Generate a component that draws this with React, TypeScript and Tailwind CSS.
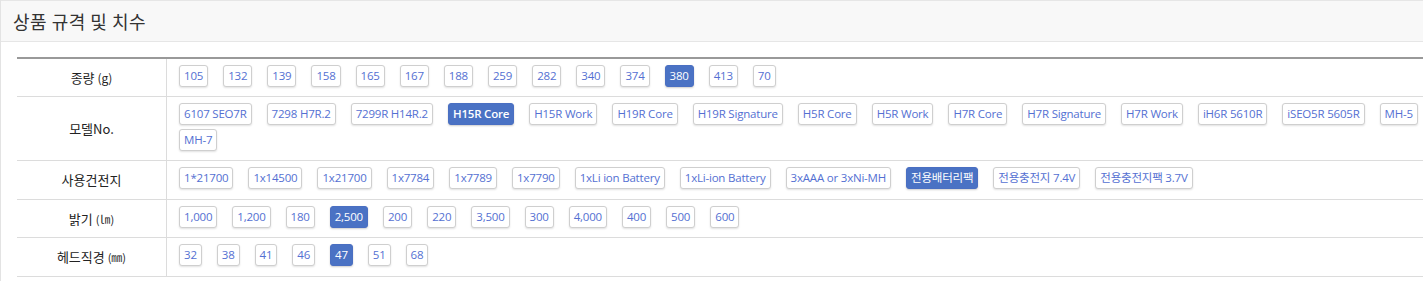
import React from "react";

type Row = { label: React.ReactNode; items: string[]; active: string; pb: string };

const rows: Row[] = [
  {
    label: (
      <>
        종량 <span className="text-[12px]">(g)</span>
      </>
    ),
    items: ["105", "132", "139", "158", "165", "167", "188", "259", "282", "340", "374", "380", "413", "70"],
    active: "380",
    pb: "pb-[9px]",
  },
  {
    label: <>모델No.</>,
    items: [
      "6107 SEO7R",
      "7298 H7R.2",
      "7299R H14R.2",
      "H15R Core",
      "H15R Work",
      "H19R Core",
      "H19R Signature",
      "H5R Core",
      "H5R Work",
      "H7R Core",
      "H7R Signature",
      "H7R Work",
      "iH6R 5610R",
      "iSEO5R 5605R",
      "MH-5",
      "MH-7",
    ],
    active: "H15R Core",
    pb: "pb-[9px]",
  },
  {
    label: <>사용건전지</>,
    items: [
      "1*21700",
      "1x14500",
      "1x21700",
      "1x7784",
      "1x7789",
      "1x7790",
      "1xLi ion Battery",
      "1xLi-ion Battery",
      "3xAAA or 3xNi-MH",
      "전용배터리팩",
      "전용충전지 7.4V",
      "전용충전지팩 3.7V",
    ],
    active: "전용배터리팩",
    pb: "pb-[10px]",
  },
  {
    label: (
      <>
        밝기 <span className="text-[11px]">(㏐)</span>
      </>
    ),
    items: ["1,000", "1,200", "180", "2,500", "200", "220", "3,500", "300", "4,000", "400", "500", "600"],
    active: "2,500",
    pb: "pb-[9px]",
  },
  {
    label: (
      <>
        헤드직경 <span className="text-[11px]">(㎜)</span>
      </>
    ),
    items: ["32", "38", "41", "46", "47", "51", "68"],
    active: "47",
    pb: "pb-[10px]",
  },
];

const chipFont = { fontFamily: '"Open Sans", "Noto Sans CJK KR", sans-serif' };

function Chip({ text, active, bold }: { text: string; active: boolean; bold: boolean }) {
  return active ? (
    <span
      style={chipFont}
      className={
        "inline-flex h-[22px] items-center rounded-[3px] border border-[#4a6fc2] bg-[#4a72c4] px-[4px] text-[11.5px] tracking-[-0.2px] text-white shadow-[0_1px_2px_rgba(0,0,0,0.2)] " +
        (bold ? "font-semibold" : "font-normal")
      }
    >
      {text}
    </span>
  ) : (
    <span
      style={chipFont}
      className="inline-flex h-[22px] items-center rounded-[3px] border border-[#cfcfcf] bg-white px-[4px] text-[11.5px] tracking-[-0.2px] text-[#5470d2] shadow-[0_1px_2px_rgba(0,0,0,0.12)]"
    >
      {text}
    </span>
  );
}

export default function App() {
  return (
    <div
      className="min-h-[281px] w-[1440px] border-l border-[#e3e3e3] bg-white text-[#333]"
      style={{ fontFamily: '"Noto Sans CJK KR", "Noto Sans", sans-serif' }}
    >
      <div className="flex h-[42px] items-center border-y border-[#e6e6e6] bg-[#f8f8f8] pl-[12px] text-[18px] tracking-[0.5px] text-[#333]">
        상품 규격 및 치수
      </div>
      <div className="pl-[16px] pt-[15px]">
        <div className="border-t-2 border-[#999]">
          {rows.map((r, i) => (
            <div key={i} className="flex border-b border-[#dcdcdc]">
              <div className="flex w-[150px] shrink-0 items-center justify-center border-r border-[#dcdcdc] text-[13px] text-[#222]">
                <span>{r.label}</span>
              </div>
              <div
                className={
                  "flex flex-1 flex-wrap gap-x-[15px] gap-y-[4px] pl-[12px] pr-[10px] pt-[6px] " + r.pb
                }
              >
                {r.items.map((t) => (
                  <Chip key={t} text={t} active={t === r.active} bold={t === "H15R Core"} />
                ))}
              </div>
            </div>
          ))}
        </div>
      </div>
    </div>
  );
}
